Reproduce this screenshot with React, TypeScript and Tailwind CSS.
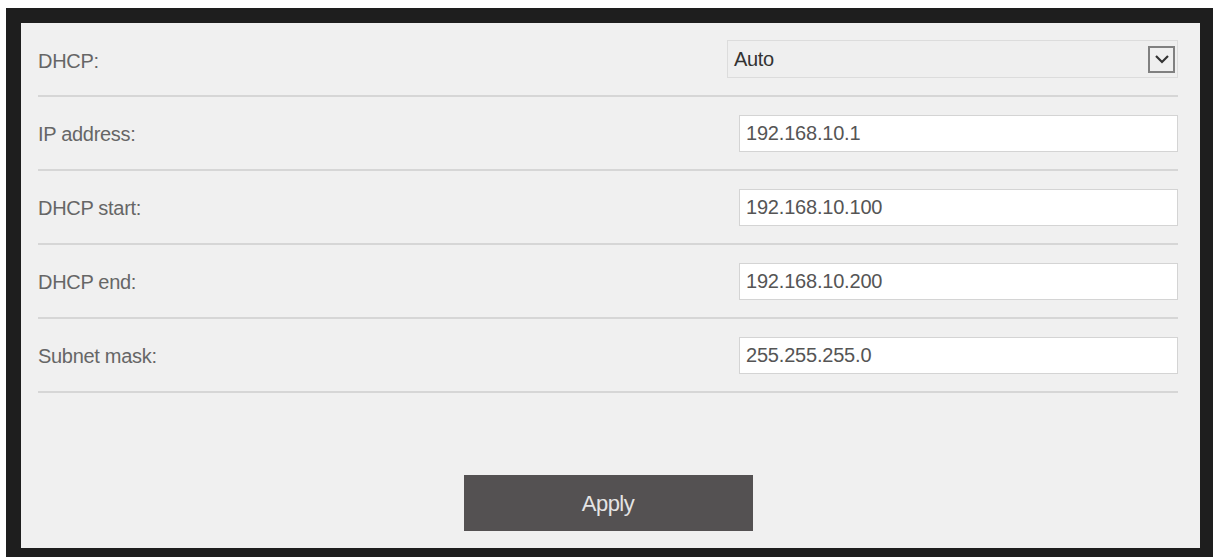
const rows = [
  { label: "IP address:", value: "192.168.10.1" },
  { label: "DHCP start:", value: "192.168.10.100" },
  { label: "DHCP end:", value: "192.168.10.200" },
  { label: "Subnet mask:", value: "255.255.255.0" },
];

export default function App() {
  return (
    <div className="min-h-[557px] bg-white pl-[6px] pt-[8px] font-['Liberation_Sans',Arial,sans-serif]">
      <div className="w-[1207px] bg-[#1e1e1e] pt-[15px] pl-[15px] pr-[13px] pb-[9px]">
        <div className="h-[525px] bg-[#f0f0f0] pl-[17px] pr-[22px] flex flex-col">
          {/* DHCP mode */}
          <div className="h-[74px] flex items-center border-b-2 border-[#d6d6d6]">
            <span className="text-[20px] tracking-[-0.3px] text-[#666] pt-[4px]">DHCP:</span>
            <div className="ml-auto w-[451px] h-[38px] border border-[#dcdcdc] bg-[#efefef] flex items-center pl-[6px] pr-[2px]">
              <span className="text-[20px] tracking-[-0.3px] text-[#333]">Auto</span>
              <div className="ml-auto w-[27px] h-[27px] border-2 border-[#808080] flex items-center justify-center">
                <svg width="16" height="12" viewBox="0 0 16 12" fill="none">
                  <path d="M2 3 L8 9 L14 3" stroke="#333" strokeWidth="2.2" />
                </svg>
              </div>
            </div>
          </div>

          {rows.map((r) => (
            <div key={r.label} className="h-[74px] flex items-center border-b-2 border-[#d6d6d6]">
              <span className="text-[20px] tracking-[-0.3px] text-[#666] pt-[2px]">{r.label}</span>
              <div className="ml-auto w-[439px] h-[37px] border border-[#d4d4d4] bg-white flex items-center pl-[6px]">
                <span className="text-[20px] tracking-[-0.2px] text-[#555]">{r.value}</span>
              </div>
            </div>
          ))}

          <div className="flex-1 flex items-end justify-center pb-[17px]">
            <button className="w-[289px] h-[56px] bg-[#545152] text-[#e4e4e4] text-[22px] tracking-[-0.5px]">
              Apply
            </button>
          </div>
        </div>
      </div>
    </div>
  );
}
